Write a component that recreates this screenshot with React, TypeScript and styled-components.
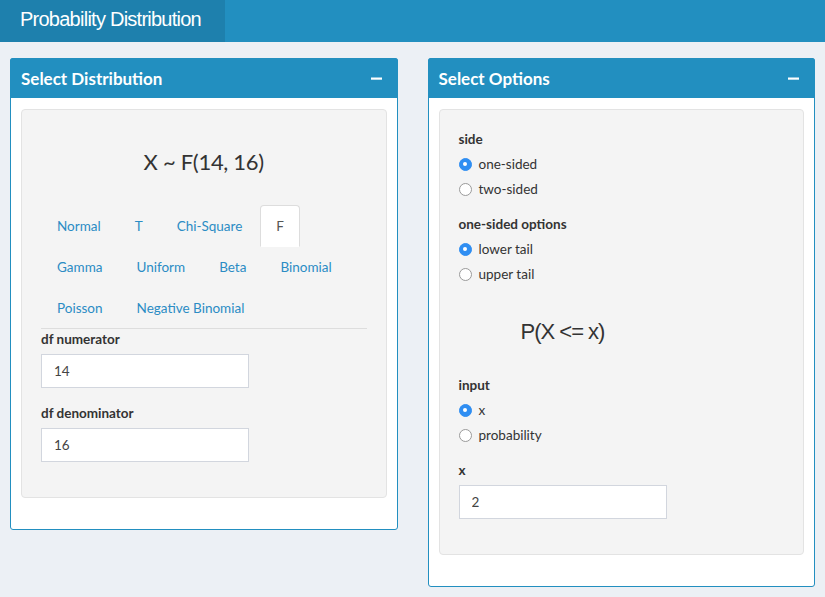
import React from "react";
import styled, { createGlobalStyle } from "styled-components";

const GlobalStyle = createGlobalStyle`
  * { box-sizing: border-box; }
  body {
    margin: 0;
    background: #ecf0f5;
    font-family: Lato, "Open Sans", sans-serif;
    font-size: 14px;
    color: #333;
  }
`;

const TopBar = styled.header`
  display: flex;
  height: 42px;
  background: #228fc0;
`;

const Logo = styled.div`
  width: 225px;
  background: #1e80ad;
  color: #fff;
  font-family: "Liberation Sans", Arial, sans-serif;
  font-size: 20px;
  letter-spacing: -0.75px;
  line-height: 38px;
  padding-left: 20px;
`;

const Content = styled.main`
  display: grid;
  grid-template-columns: 1fr 1fr;
  gap: 30px;
  padding: 16px 10px;
  align-items: start;
`;

const Box = styled.section`
  background: #fff;
  border: 1px solid #228fc0;
  border-radius: 3px;
`;

const BoxHeader = styled.div`
  display: flex;
  align-items: center;
  justify-content: space-between;
  height: 40px;
  margin: -1px -1px 0;
  padding: 0 16px 0 11px;
  background: #228fc0;
  border-radius: 3px 3px 0 0;
  color: #fff;
  font-size: 17px;
  font-weight: 700;
`;

const Collapse = styled.button`
  border: 0;
  background: none;
  padding: 0;
  display: flex;
  cursor: pointer;
`;

const BoxBody = styled.div`
  padding: 11px 10px 10px;
`;

const Well = styled.div`
  display: flex;
  flex-direction: column;
  background: #f4f4f4;
  border: 1px solid #e3e3e3;
  border-radius: 4px;
  padding: 19px 19px 20px;
  margin-bottom: 21px;
`;

const Formula = styled.h3<{ $plain?: boolean }>`
  margin: 20px 0 30px;
  height: 26px;
  line-height: 26px;
  font-weight: 400;
  color: #333;
  ${(p) =>
    p.$plain
      ? `font-family: "Liberation Sans", Arial, sans-serif;
         font-size: 22px;
         letter-spacing: -1px;
         padding-left: 62px;`
      : `font-size: 22px;
         letter-spacing: -0.3px;
         text-align: center;`}
`;

const Tabs = styled.ul`
  display: flex;
  flex-wrap: wrap;
  list-style: none;
  margin: 0;
  padding: 0;
  border-bottom: 1px solid #ddd;
`;

const Tab = styled.li<{ $active?: boolean }>`
  margin: 0 2px -1px 0;
  padding: 10px 15px;
  line-height: 20px;
  border: 1px solid ${(p) => (p.$active ? "#ddd" : "transparent")};
  border-bottom-color: transparent;
  border-radius: 4px 4px 0 0;
  background: ${(p) => (p.$active ? "#fff" : "transparent")};
  color: ${(p) => (p.$active ? "#555" : "#2b8cc4")};
  font-size: 13.5px;
  cursor: pointer;
`;

const Group = styled.div`
  margin-bottom: 15px;
`;

const Label = styled.label`
  display: block;
  font-weight: 700;
  line-height: 20px;
  margin-bottom: 5px;
  font-size: 13.5px;
`;

const Input = styled.input`
  display: block;
  width: 208px;
  height: 34px;
  padding: 6px 12px;
  border: 1px solid #d2d6de;
  border-radius: 0;
  background: #fff;
  font: inherit;
  font-size: 13.5px;
  color: #444;
`;

const Options = styled.div`
  display: flex;
  flex-direction: column;
  gap: 5px;
`;

const RadioRow = styled.label`
  display: flex;
  align-items: center;
  gap: 7px;
  height: 20px;
  font-size: 13.5px;
  cursor: pointer;
`;

const RadioDot = styled.span<{ $on?: boolean }>`
  width: 13px;
  height: 13px;
  border-radius: 50%;
  flex: none;
  display: flex;
  align-items: center;
  justify-content: center;
  background: ${(p) => (p.$on ? "#2f8ef2" : "#fff")};
  border: 1px solid ${(p) => (p.$on ? "#2f8ef2" : "#9a9a9a")};
  &::after {
    content: "";
    width: 4px;
    height: 4px;
    border-radius: 50%;
    background: ${(p) => (p.$on ? "#fff" : "transparent")};
  }
`;

const Minus = () => (
  <Collapse aria-label="collapse">
    <svg width="11" height="11" viewBox="0 0 11 11">
      <rect x="0" y="4.5" width="11" height="2.2" fill="#fff" />
    </svg>
  </Collapse>
);

const Radio = ({ label, on }: { label: string; on?: boolean }) => (
  <RadioRow>
    <RadioDot $on={on} />
    {label}
  </RadioRow>
);

const RadioGroup = ({ title, items, selected }: { title: string; items: string[]; selected: string }) => (
  <Group>
    <Label>{title}</Label>
    <Options>
      {items.map((it) => (
        <Radio key={it} label={it} on={it === selected} />
      ))}
    </Options>
  </Group>
);

const distributions = [
  "Normal",
  "T",
  "Chi-Square",
  "F",
  "Gamma",
  "Uniform",
  "Beta",
  "Binomial",
  "Poisson",
  "Negative Binomial",
];

export default function App() {
  return (
    <>
      <GlobalStyle />
      <TopBar>
        <Logo>Probability Distribution</Logo>
      </TopBar>
      <Content>
        <Box>
          <BoxHeader>
            Select Distribution
            <Minus />
          </BoxHeader>
          <BoxBody>
            <Well>
              <Formula>X ~ F(14, 16)</Formula>
              <Tabs>
                {distributions.map((d) => (
                  <Tab key={d} $active={d === "F"}>
                    {d}
                  </Tab>
                ))}
              </Tabs>
              <Group>
                <Label>df numerator</Label>
                <Input defaultValue="14" />
              </Group>
              <Group>
                <Label>df denominator</Label>
                <Input defaultValue="16" />
              </Group>
            </Well>
          </BoxBody>
        </Box>
        <Box>
          <BoxHeader>
            Select Options
            <Minus />
          </BoxHeader>
          <BoxBody>
            <Well>
              <RadioGroup title="side" items={["one-sided", "two-sided"]} selected="one-sided" />
              <RadioGroup
                title="one-sided options"
                items={["lower tail", "upper tail"]}
                selected="lower tail"
              />
              <Formula $plain>P(X &lt;= x)</Formula>
              <RadioGroup title="input" items={["x", "probability"]} selected="x" />
              <Group>
                <Label>x</Label>
                <Input defaultValue="2" />
              </Group>
            </Well>
          </BoxBody>
        </Box>
      </Content>
    </>
  );
}
